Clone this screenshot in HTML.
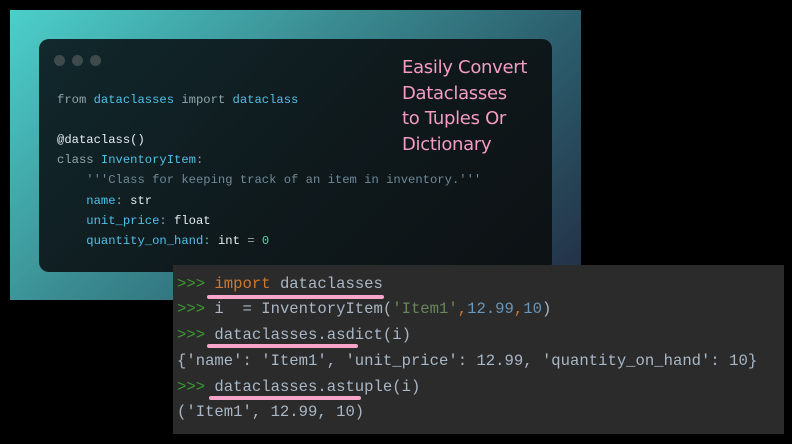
<!DOCTYPE html>
<html><head><style>
*{margin:0;padding:0}
body{width:792px;height:444px;background:#000;position:relative;overflow:hidden;font-family:"Liberation Mono",monospace}
#bg{position:absolute;left:10px;top:10px;width:571px;height:290px;background:linear-gradient(135deg,#4ccfcb 0%,#3a8a90 40%,#2b5a6a 70%,#232c42 100%)}
#card{position:absolute;left:39px;top:39px;width:513px;height:233px;border-radius:10px;background:linear-gradient(135deg,#11282c 0%,#0f1a1d 50%,#0d1114 100%)}
.dot{position:absolute;top:55px;width:11px;height:11px;border-radius:50%;background:#3f4a4d}
.code{position:absolute;left:57px;font-size:12.2px;color:#8fa5ad;white-space:pre;line-height:14px}
.b{color:#4fc1e9}.w{color:#e6edf0}.c{color:#6f8a99}.n{color:#5fd0a6}
#hand{position:absolute;left:402px;top:55px;color:#f59bc4;font-family:"DejaVu Sans",sans-serif;font-size:18px;line-height:25.5px;letter-spacing:-0.3px}
#term{position:absolute;left:173px;top:265px;width:611px;height:169px;background:#2b2b2b}
.t{position:absolute;left:177px;font-size:15.6px;color:#a9b7c6;white-space:pre;line-height:18px}
.p{color:#3a9a2e}.o{color:#cc7832}.s{color:#6a8759}.num{color:#6897bb}
.u{position:absolute;height:4px;border-radius:2px;background:#f7a6c9}
</style></head><body>
<div id="bg"></div>
<div id="card"></div>
<div class="dot" style="left:54px"></div><div class="dot" style="left:72px"></div><div class="dot" style="left:90px"></div>
<div class="code" style="top:93px">from <span class="b">dataclasses</span> import <span class="b">dataclass</span></div>
<div class="code w" style="top:133px">@dataclass()</div>
<div class="code" style="top:153px">class <span class="b">InventoryItem</span>:</div>
<div class="code c" style="top:173px">    '''Class for keeping track of an item in inventory.'''</div>
<div class="code" style="top:194px">    <span class="b">name</span>: <span class="w">str</span></div>
<div class="code" style="top:214px">    <span class="b">unit_price</span>: <span class="w">float</span></div>
<div class="code" style="top:234px">    <span class="b">quantity_on_hand</span>: <span class="w">int</span> = <span class="n">0</span></div>
<div id="hand">Easily Convert<br>Dataclasses<br>to Tuples Or<br>Dictionary</div>
<div id="term"></div>
<div class="t" style="top:275px"><span class="p">&gt;&gt;&gt;</span> <span class="o">import</span> dataclasses</div>
<div class="t" style="top:300px"><span class="p">&gt;&gt;&gt;</span> i  = InventoryItem(<span class="s">'Item1'</span><span class="o">,</span><span class="num">12.99</span><span class="o">,</span><span class="num">10</span>)</div>
<div class="t" style="top:326px"><span class="p">&gt;&gt;&gt;</span> dataclasses.asdict(i)</div>
<div class="t" style="top:352px">{'name': 'Item1', 'unit_price': 12.99, 'quantity_on_hand': 10}</div>
<div class="t" style="top:378px"><span class="p">&gt;&gt;&gt;</span> dataclasses.astuple(i)</div>
<div class="t" style="top:403px">('Item1', 12.99, 10)</div>
<div class="u" style="left:207px;top:295px;width:177px"></div>
<div class="u" style="left:207px;top:344px;width:151px"></div>
<div class="u" style="left:209px;top:396px;width:152px"></div>
</body></html>
